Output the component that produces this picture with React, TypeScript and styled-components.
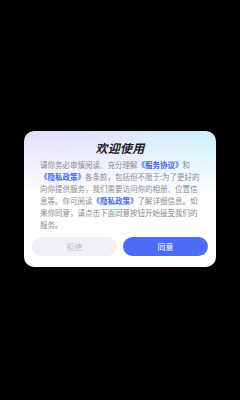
import React from "react";
import styled, { createGlobalStyle } from "styled-components";

const Global = createGlobalStyle`
  html, body { margin: 0; padding: 0; background: #000; }
  body { font-family: "Noto Sans CJK SC", "Noto Sans", sans-serif; }
`;

const Screen = styled.div`
  width: 240px;
  height: 400px;
  background: #000;
  display: flex;
  align-items: flex-start;
  justify-content: center;
  padding-top: 131px;
  box-sizing: border-box;
`;

const Card = styled.div`
  width: 192px;
  box-sizing: border-box;
  border-radius: 10px;
  background:
    linear-gradient(180deg, rgba(255,255,255,0) 0%, #ffffff 48%),
    linear-gradient(90deg, #e4defb 0%, #dfe6fb 50%, #c9f1fd 100%);
  padding: 9px 8px 11px;
  display: flex;
  flex-direction: column;
`;

const Title = styled.div`
  font-size: 12px;
  line-height: 16px;
  font-weight: 700;
  font-style: italic;
  color: #1c1c1e;
  text-align: center;
  letter-spacing: 0.3px;
`;

const Body = styled.p`
  margin: 3px 0 0;
  padding: 0 8px;
  font-size: 7.5px;
  line-height: 12px;
  color: #8a8b90;
`;

const Link = styled.span`
  color: #3e6bf4;
  font-weight: 700;
`;

const Actions = styled.div`
  margin-top: 6px;
  display: grid;
  grid-template-columns: 1fr 1fr;
  gap: 6px;
`;

const Button = styled.button<{ $primary?: boolean }>`
  height: 19px;
  border: none;
  border-radius: 10px;
  padding: 0;
  font-family: inherit;
  font-size: 8px;
  background: ${(p) => (p.$primary ? "#4b6df5" : "#f0f1f5")};
  color: ${(p) => (p.$primary ? "#ffffff" : "#b8bbc5")};
`;

export default function App() {
  return (
    <Screen>
      <Global />
      <Card>
        <Title>欢迎使用</Title>
        <Body>
          请你务必审慎阅读、充分理解<Link>《服务协议》</Link>和
          <Link>《隐私政策》</Link>各条款，包括但不限于:为了更好的向你提供服务，我们需要访问你的相册、位置信息等。你可阅读
          <Link>《隐私政策》</Link>了解详细信息。如果你同意，请点击下面同意按钮开始接受我们的服务。
        </Body>
        <Actions>
          <Button>拒绝</Button>
          <Button $primary>同意</Button>
        </Actions>
      </Card>
    </Screen>
  );
}
